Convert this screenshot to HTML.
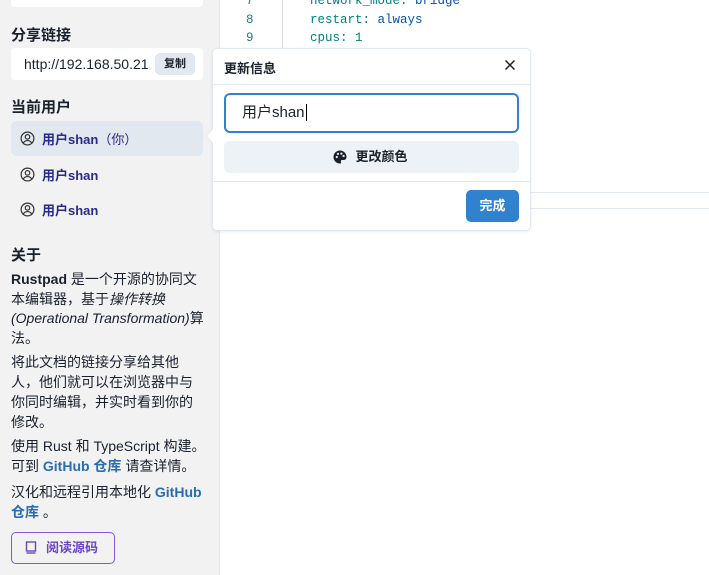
<!DOCTYPE html>
<html><head><meta charset="utf-8"><style>
*{box-sizing:border-box;margin:0;padding:0}
body{width:709px;height:575px;overflow:hidden;font-family:"Liberation Sans","Noto Sans CJK SC",sans-serif;background:#fff;position:relative;color:#1a202c}
.side{position:absolute;left:0;top:0;width:219px;height:575px;background:#f2f2f2}
.abs{position:absolute}
h3{position:absolute;left:11px;font-size:15px;font-weight:700;color:#1a202c}
.user{position:absolute;left:11px;width:192px;height:35px;border-radius:6px;display:flex;align-items:center;padding-left:9px;font-size:13px;font-weight:700;color:#2a2a8a}
.user svg{margin-right:7px}
.p{position:absolute;left:11px;width:210px;font-size:14px;line-height:19.5px;color:#1a202c;white-space:nowrap}
.p a{color:#2b6cb0;font-weight:700;text-decoration:none}
.mono{font-family:"Liberation Mono",monospace;font-size:12.5px;position:absolute}
</style></head><body>
<div class="side">
  <div class="abs" style="left:11px;top:0;width:192px;height:7px;background:#fff;border-radius:0 0 4px 4px"></div>
  <h3 style="top:24px">分享链接</h3>
  <div class="abs" style="left:11px;top:48px;width:192px;height:32px;background:#fff;border-radius:3px"></div>
  <div class="abs" style="left:24px;top:56px;font-size:14px;color:#1a202c">http://192.168.50.21</div>
  <div class="abs" style="left:155px;top:53px;width:40px;height:22px;background:#e2e8f0;border-radius:5px;font-size:11px;font-weight:700;text-align:center;line-height:22px">复制</div>
  <h3 style="top:96px">当前用户</h3>
  <div class="user" style="top:121px;background:#e2e8f0"><svg width="15" height="15" viewBox="0 0 16 16" fill="none" stroke="#333" stroke-width="1.3"><circle cx="8" cy="8" r="6.8"/><circle cx="8" cy="6.3" r="2.4"/><path d="M3.6 12.6c1.2-1.8 2.6-2.4 4.4-2.4s3.2.6 4.4 2.4"/></svg>用户shan<span style="font-weight:400;color:#2a2a8a">（你）</span></div>
  <div class="user" style="top:157px"><svg width="15" height="15" viewBox="0 0 16 16" fill="none" stroke="#333" stroke-width="1.3"><circle cx="8" cy="8" r="6.8"/><circle cx="8" cy="6.3" r="2.4"/><path d="M3.6 12.6c1.2-1.8 2.6-2.4 4.4-2.4s3.2.6 4.4 2.4"/></svg>用户shan</div>
  <div class="user" style="top:192px"><svg width="15" height="15" viewBox="0 0 16 16" fill="none" stroke="#333" stroke-width="1.3"><circle cx="8" cy="8" r="6.8"/><circle cx="8" cy="6.3" r="2.4"/><path d="M3.6 12.6c1.2-1.8 2.6-2.4 4.4-2.4s3.2.6 4.4 2.4"/></svg>用户shan</div>
  <h3 style="top:244px">关于</h3>
  <div class="p" style="top:270px"><b>Rustpad</b> 是一个开源的协同文<br>本编辑器，基于<i>操作转换</i><br><i>(Operational Transformation)</i>算<br>法。</div>
  <div class="p" style="top:352px;line-height:20px">将此文档的链接分享给其他<br>人，他们就可以在浏览器中与<br>你同时编辑，并实时看到你的<br>修改。</div>
  <div class="p" style="top:437px">使用 Rust 和 TypeScript 构建。<br>可到 <a>GitHub 仓库</a> 请查详情。</div>
  <div class="p" style="top:483px">汉化和远程引用本地化 <a>GitHub</a><br><a>仓库</a> 。</div>
  <div class="abs" style="left:11px;top:532px;width:104px;height:32px;border:1px solid #805ad5;border-radius:5px;color:#6b46c1;font-size:13px;font-weight:700;line-height:30px;padding-left:34px">阅读源码</div>
  <svg class="abs" style="left:25px;top:541px" width="12" height="13" viewBox="0 0 12 13" fill="none" stroke="#6b46c1" stroke-width="1.4"><rect x="1.5" y="1" width="9" height="9"/><path d="M1.5 12h9"/></svg>
</div>
<div class="abs" style="left:219px;top:0;width:1px;height:575px;background:#e2e8f0"></div>
<div class="abs" style="left:282px;top:0;width:1px;height:48px;background:#ddd"></div>
<div class="mono" style="left:246px;top:-6px;color:#237893">7</div>
<div class="mono" style="left:246px;top:13px;color:#237893">8</div>
<div class="mono" style="left:246px;top:31px;color:#237893">9</div>
<div class="mono" style="left:310px;top:-6px"><span style="color:#008080">network_mode:</span> <span style="color:#0451a5">bridge</span></div>
<div class="mono" style="left:310px;top:13px"><span style="color:#008080">restart:</span> <span style="color:#0451a5">always</span></div>
<div class="mono" style="left:310px;top:31px"><span style="color:#008080">cpus:</span> <span style="color:#098658">1</span></div>
<div class="abs" style="left:219px;top:192px;width:490px;height:1px;background:#e2e8f0"></div>
<div class="abs" style="left:219px;top:208px;width:490px;height:1px;background:#e2e8f0"></div>
<div class="abs" style="left:212px;top:48px;width:319px;height:183px;background:#fff;border:1px solid #e2e8f0;border-radius:5px;box-shadow:0 1px 3px rgba(0,0,0,.08)">
  <div class="abs" style="left:-6px;top:82px;width:10px;height:10px;background:#fff;border-left:1px solid #e2e8f0;border-bottom:1px solid #e2e8f0;transform:rotate(45deg)"></div>
  <div class="abs" style="left:11px;top:9px;font-size:13px;font-weight:700">更新信息</div>
  <svg class="abs" style="left:291px;top:10px" width="12" height="12" viewBox="0 0 12 12" stroke="#1a202c" stroke-width="1.5"><path d="M1.5 1.5l9 9M10.5 1.5l-9 9"/></svg>
  <div class="abs" style="left:0;top:35px;width:317px;height:1px;background:#e2e8f0"></div>
  <div class="abs" style="left:11px;top:44px;width:295px;height:40px;border:2px solid #3182ce;border-radius:6px;font-size:15px;line-height:36px;padding-left:16px;color:#1a202c">用户shan<span style="border-left:1px solid #000;margin-left:1px"></span></div>
  <div class="abs" style="left:11px;top:92px;width:295px;height:32px;background:#edf2f7;border-radius:6px;font-size:13px;font-weight:700;line-height:32px;text-align:center;padding-left:20px">更改颜色</div>
  <svg class="abs" style="left:120px;top:101px" width="14" height="14" viewBox="0 0 14 14"><path d="M7 .5a6.5 6.5 0 100 13c1 0 1.4-.8 1-1.6-.5-.9.1-1.9 1.1-1.9h1.5c1.7 0 2.9-1.3 2.9-3C13.5 3.3 10.6.5 7 .5z" fill="#1a202c"/><circle cx="3.8" cy="7" r="1.1" fill="#edf2f7"/><circle cx="5" cy="3.9" r="1.1" fill="#edf2f7"/><circle cx="8.4" cy="3.6" r="1.1" fill="#edf2f7"/><circle cx="10.6" cy="6" r="1.1" fill="#edf2f7"/></svg>
  <div class="abs" style="left:0;top:132px;width:317px;height:1px;background:#e2e8f0"></div>
  <div class="abs" style="left:253px;top:141px;width:53px;height:32px;background:#3182ce;border-radius:5px;color:#fff;font-size:13px;font-weight:700;text-align:center;line-height:32px">完成</div>
</div>
</body></html>
